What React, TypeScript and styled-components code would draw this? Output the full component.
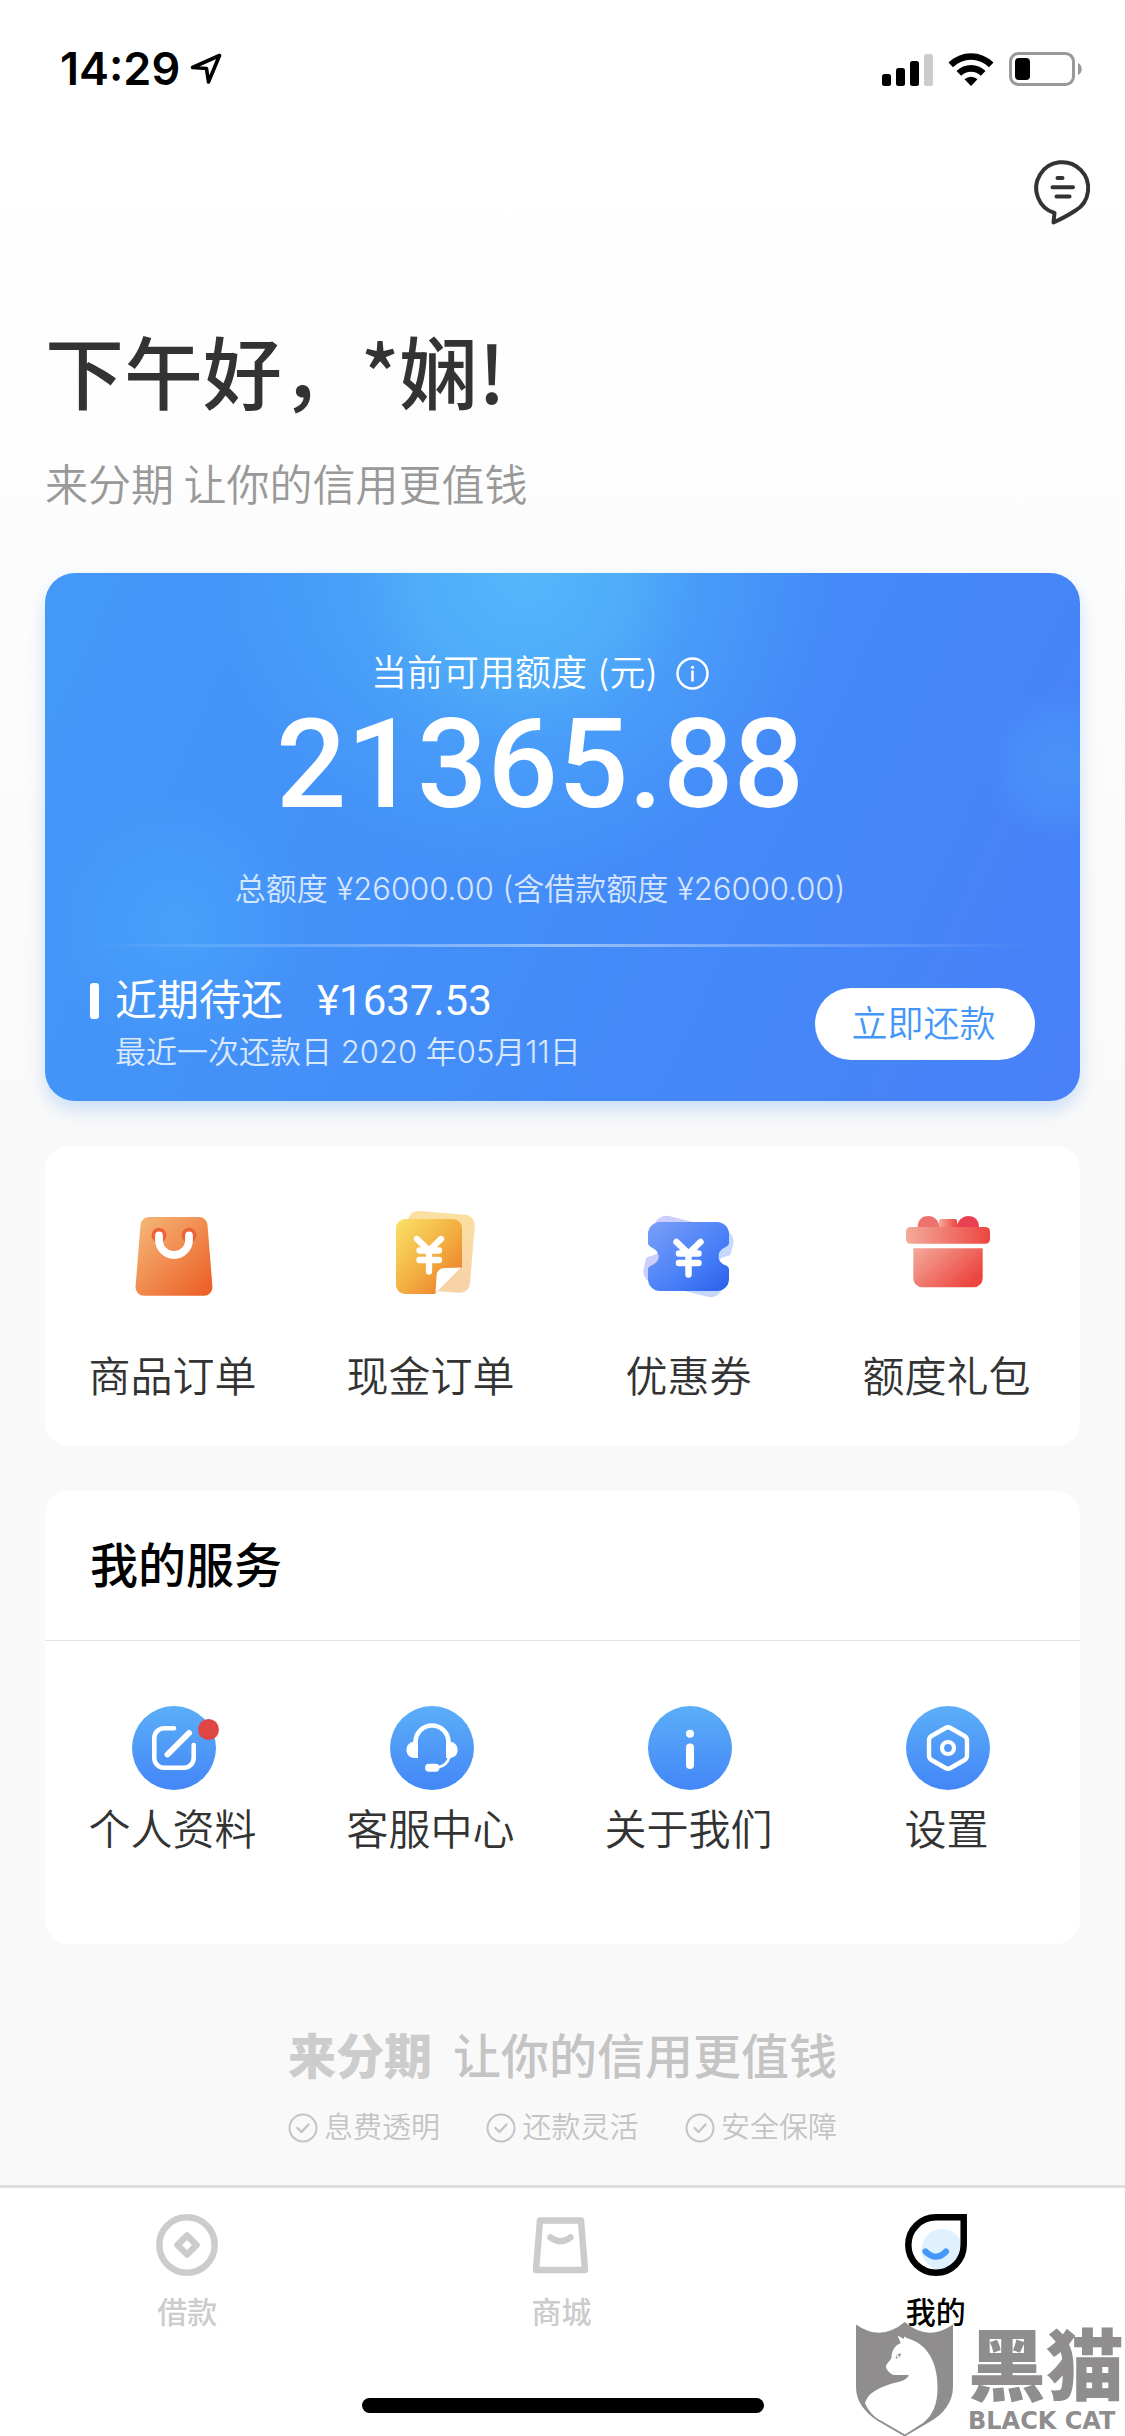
import React from "react";
import styled, { createGlobalStyle } from "styled-components";

const cjk = `"Noto Sans CJK SC", sans-serif`;

const GlobalStyle = createGlobalStyle`
  *, *::before, *::after { box-sizing: border-box; }
  body {
    margin: 0;
    background: #f9f9f9;
    color: #333;
    font-family: Inter, ${cjk};
  }
  h1, h2, p { margin: 0; font-weight: 400; }
  a { color: inherit; text-decoration: none; }
  button { font: inherit; border: 0; padding: 0; background: none; cursor: pointer; }
  svg { display: block; overflow: visible; }
`;

const Page = styled.div`
  position: relative;
  display: flex;
  flex-direction: column;
  min-height: 100vh;
  background: linear-gradient(#fff 0, #fff 160px, #f9f9f9 1150px);
`;

const StatusBar = styled.header`
  display: flex;
  align-items: center;
  justify-content: space-between;
  height: 138px;
  padding: 0 42px 0 60px;
`;

const StatusGroup = styled.div<{ $gap: number }>`
  display: flex;
  align-items: center;
  gap: ${(p) => p.$gap}px;
`;

const Clock = styled.time`
  font-size: 45px;
  font-weight: 600;
  line-height: 54px;
  color: #000;
`;

const Toolbar = styled.div`
  display: flex;
  justify-content: flex-end;
  padding: 22px 36px 0;
`;

const Main = styled.main`
  flex: 1;
  display: flex;
  flex-direction: column;
  padding: 97px 45px 0;
`;

const Greeting = styled.h1`
  font-family: ${cjk};
  font-size: 79px;
  font-weight: 500;
  line-height: 96px;
`;

const Tagline = styled.p`
  margin-top: 34px;
  font-family: ${cjk};
  font-size: 43px;
  font-weight: 350;
  line-height: 60px;
  color: #999;
`;

const CreditCard = styled.section`
  margin-top: 61px;
  padding: 76px 45px 28px;
  border-radius: 30px;
  color: #fff;
  background:
    radial-gradient(circle at 480px 0, rgba(86, 190, 250, 0.85) 0, rgba(86, 190, 250, 0.6) 110px, rgba(86, 190, 250, 0.3) 170px, rgba(86, 190, 250, 0) 310px),
    radial-gradient(circle at 134px 353px, rgba(76, 170, 252, 0.6) 0, rgba(76, 170, 252, 0.3) 60px, rgba(76, 170, 252, 0) 130px),
    radial-gradient(circle at calc(100% - 18px) 193px, rgba(76, 160, 248, 0.5) 0, rgba(76, 160, 248, 0.3) 45px, rgba(76, 160, 248, 0) 75px),
    linear-gradient(115deg, #4499f8 0%, #438cf8 55%, #4880f8 100%);
  box-shadow: 0 9px 18px rgba(68, 145, 240, 0.26);
`;

const Summary = styled.div`
  display: flex;
  flex-direction: column;
  align-items: center;
  padding-right: 45px;
`;

const LimitLabel = styled.div`
  display: flex;
  align-items: center;
  gap: 18px;
  font-size: 36px;
  font-weight: 350;
  line-height: 48px;
`;

const Amount = styled.strong`
  margin-top: 14px;
  font-family: Roboto, sans-serif;
  font-size: 124px;
  font-weight: 500;
  line-height: 108px;
`;

const Total = styled.p`
  margin-top: 49px;
  font-size: 31px;
  font-weight: 350;
  line-height: 42px;
  opacity: 0.78;
`;

const Rule = styled.div`
  height: 3px;
  margin-top: 34px;
  background: linear-gradient(90deg, rgba(255, 255, 255, 0), rgba(255, 255, 255, 0.45) 50%, rgba(255, 255, 255, 0));
`;

const DueRow = styled.div`
  display: flex;
  align-items: center;
  justify-content: space-between;
  margin-top: 27px;
`;

const DueTitle = styled.h2`
  display: flex;
  align-items: center;
  gap: 16px;
  font-family: Roboto, ${cjk};
  font-size: 42px;
  font-weight: 400;
  line-height: 54px;

  &::before {
    content: "";
    width: 9px;
    height: 36px;
    border-radius: 3px;
    background: #fff;
  }
`;

const DueAmount = styled.span`
  margin-left: 18px;
`;

const DueDate = styled.p`
  margin-top: 3px;
  padding-left: 25px;
  font-size: 31px;
  font-weight: 350;
  line-height: 42px;
  opacity: 0.8;
`;

const PayButton = styled.button`
  width: 220px;
  height: 72px;
  padding: 0 3px 6px 0;
  border-radius: 36px;
  background: #fff;
  color: #4497f8;
  font-family: ${cjk};
  font-size: 36px;
  font-weight: 350;
`;

const Panel = styled.section<{ $gap: number }>`
  margin-top: ${(p) => p.$gap}px;
  border-radius: 24px;
  background: #fff;
`;

const PanelTitle = styled.h2`
  padding: 39px 45px 38px;
  border-bottom: 1px solid #e4e4e4;
  color: #000;
  font-size: 48px;
  font-weight: 500;
  line-height: 72px;
`;

const Menu = styled.nav<{ $top: number; $bottom: number }>`
  display: grid;
  grid-template-columns: repeat(4, 1fr);
  padding: ${(p) => p.$top}px 3px ${(p) => p.$bottom}px 0;
`;

const MenuItem = styled.a<{ $gap: number }>`
  display: flex;
  flex-direction: column;
  align-items: center;
  gap: ${(p) => p.$gap}px;
  font-family: ${cjk};
  font-size: 42px;
  font-weight: 350;
  line-height: 60px;
`;

const MenuLabel = styled.span`
  padding-right: 3px;
`;

const Disc = styled.span`
  position: relative;
  width: 84px;
  height: 84px;
  border-radius: 50%;
  background: linear-gradient(#5caef8, #4386f8);
`;

const Dot = styled.span`
  position: absolute;
  top: 13px;
  right: -3px;
  width: 21px;
  height: 21px;
  border-radius: 50%;
  background: #e04545;
`;

const Promise = styled.footer`
  display: flex;
  flex-direction: column;
  align-self: center;
  width: 549px;
  margin: 77px 0 36px;
  color: #c4c4c4;
`;

const PromiseRow = styled.div`
  display: flex;
  align-items: center;
  justify-content: space-between;
`;

const Brand = styled.strong`
  font-size: 48px;
  font-weight: 900;
  line-height: 72px;
  color: #ccc;
`;

const Slogan = styled.span`
  font-size: 48px;
  font-weight: 500;
  line-height: 72px;
`;

const PromiseList = styled.ul`
  display: flex;
  justify-content: space-between;
  margin: 14px 0 0;
  padding: 0;
  list-style: none;
`;

const PromiseItem = styled.li`
  display: flex;
  align-items: center;
  gap: 6px;
  font-size: 29px;
  font-weight: 350;
  line-height: 42px;
`;

const TabBar = styled.nav`
  display: grid;
  grid-template-columns: repeat(3, 1fr);
  padding: 26px 2px 0 0;
  border-top: 3px solid #dfdfdf;
  background: #fff;
`;

const Tab = styled.a<{ $active?: boolean }>`
  display: flex;
  flex-direction: column;
  align-items: center;
  gap: 15px;
  color: ${(p) => (p.$active ? "#000" : "#ccc")};
  font-size: 30px;
  font-weight: 500;
  line-height: 42px;
`;

const HomeArea = styled.div`
  display: flex;
  justify-content: center;
  padding: 65px 0 24px;
  background: #fff;
`;

const HomeIndicator = styled.div`
  width: 402px;
  height: 15px;
  border-radius: 8px;
  background: #000;
`;

const Watermark = styled.div`
  position: absolute;
  right: 1px;
  bottom: 0;
  display: flex;
  align-items: flex-end;
  gap: 15px;
  color: #8f8d8e;
`;

const WatermarkText = styled.div`
  display: flex;
  flex-direction: column;
  font-family: ${cjk};
  font-size: 78px;
  font-weight: 900;
  line-height: 78px;
`;

const WatermarkLatin = styled.span`
  margin-top: 5px;
  font-family: "DejaVu Sans", sans-serif;
  font-size: 24px;
  font-weight: 700;
  line-height: 32px;
`;

const yen = "M30 28 42 39.500 54 28M42 39.500V60.500M32.500 39.500h19.500M32.500 49h19.500";

const ticket =
  "M15 11H72a12 12 0 0 1 12 12v9c0 5-10.300 4-10.300 13.500S84 53 84 58v10a12 12 0 0 1-12 12H15a12 12 0 0 1-12-12V58c0-4 10.700-4 10.700-12.500S3 37 3 32v-9a12 12 0 0 1 12-12Z";

const SignalIcon = () => (
  <svg width="51" height="33" viewBox="0 0 51 33" aria-hidden="true">
    <rect x="0" y="21" width="9" height="12" rx="2.500" />
    <rect x="14" y="15" width="9" height="18" rx="2.500" />
    <rect x="28" y="8" width="9" height="25" rx="2.500" />
    <rect x="42" y="1" width="9" height="32" rx="2.500" fill="#ccc" />
  </svg>
);

const WifiIcon = () => (
  <svg width="46" height="33" viewBox="0 0 46 33" aria-hidden="true">
    <path d="M.5 9.500a32 32 0 0 1 45 0l-4.500 4.800a25.500 25.500 0 0 0-36 0Z" />
    <path d="M8.500 18a20.500 20.500 0 0 1 29 0l-4.700 4.700a14 14 0 0 0-19.600 0Z" />
    <path d="M16.500 26.300a9.300 9.300 0 0 1 13 0L23 33Z" />
  </svg>
);

const BatteryIcon = () => (
  <svg width="74" height="34" viewBox="0 0 74 34" aria-hidden="true">
    <rect x="1.500" y="1.500" width="63" height="31" rx="8" fill="none" stroke="#999" strokeWidth="3" />
    <rect x="6" y="6" width="15" height="22" rx="4" />
    <path d="M69 11c5 2 5 10 0 12Z" fill="#999" />
  </svg>
);

const LocationIcon = () => (
  <svg width="32" height="32" viewBox="0 0 32 32" aria-hidden="true">
    <path d="M29.500 2.500 2.500 14.500 16.500 15.500 18.500 29Z" fill="none" stroke="#000" strokeWidth="3.600" strokeLinejoin="round" />
  </svg>
);

const ChatIcon = () => (
  <svg width="57" height="65" viewBox="0 0 57 65" fill="none" stroke="#333" strokeWidth="4" strokeLinecap="round" strokeLinejoin="round" aria-hidden="true">
    <path d="M22.500 53A26 26 0 1 1 43.500 50.500C36 55.500 29 59 21.500 62.500Z" />
    <path d="M25.500 18h5M20.500 27.300h20.500M24.500 36.500h13" />
  </svg>
);

const HintIcon = () => (
  <svg width="33" height="33" viewBox="0 0 33 33" fill="none" stroke="#fff" aria-hidden="true">
    <circle cx="16.500" cy="16.500" r="15" strokeWidth="2.500" />
    <path d="M16.500 14.500v9" strokeWidth="2.600" strokeLinecap="round" />
    <circle cx="16.500" cy="10.300" r="1.600" fill="#fff" stroke="none" />
  </svg>
);

const BagIcon = () => (
  <svg width="90" height="90" viewBox="0 0 90 90" aria-hidden="true">
    <defs>
      <linearGradient id="bag" x1="0" y1="0" x2="1" y2="1">
        <stop offset="0" stopColor="#f5ba7b" />
        <stop offset="1" stopColor="#ec5b22" />
      </linearGradient>
    </defs>
    <path d="M20 6H70a8.500 8.500 0 0 1 8.500 8L83.500 76a8.500 8.500 0 0 1-8.500 8.700H15A8.500 8.500 0 0 1 6.500 76L11.500 14A8.500 8.500 0 0 1 20 6Z" fill="url(#bag)" />
    <circle cx="30" cy="24.300" r="7.500" fill="#ee6238" />
    <circle cx="60" cy="24.300" r="7.500" fill="#ee6238" />
    <path d="M30 24.500V29a15 15 0 0 0 30 0V24.500" fill="none" stroke="#fff" strokeWidth="7.800" strokeLinecap="round" />
  </svg>
);

const CashIcon = () => (
  <svg width="90" height="90" viewBox="0 0 90 90" aria-hidden="true">
    <defs>
      <linearGradient id="cash" x1="0" y1="0" x2="1" y2="1">
        <stop offset="0" stopColor="#fae268" />
        <stop offset=".55" stopColor="#f2ab3e" />
        <stop offset="1" stopColor="#ec6f26" />
      </linearGradient>
      <linearGradient id="cashBack" x1="0" y1="0" x2="0" y2="1">
        <stop offset="0" stopColor="#fae0a0" />
        <stop offset="1" stopColor="#f7d2a8" />
      </linearGradient>
    </defs>
    <path d="M32 0 78 3.800A10.500 10.500 0 0 1 87.800 15L83 72a10 10 0 0 1-11 9.700L48 80 21 8A11 11 0 0 1 32 0Z" fill="url(#cashBack)" />
    <path d="M18 8H66a9 9 0 0 1 9 9V56.500L48 83H18a9 9 0 0 1-9-9V17a9 9 0 0 1 9-9Z" fill="url(#cash)" />
    <path d="M48.500 82.500 49.500 66q0-9 9-9L74.500 56.500Z" fill="#fff" />
    <path d={yen} fill="none" stroke="#fff" strokeWidth="6.300" strokeLinecap="round" />
  </svg>
);

const CouponIcon = () => (
  <svg width="90" height="90" viewBox="0 0 90 90" aria-hidden="true">
    <defs>
      <linearGradient id="coupon" x1="0" y1="0" x2="1" y2="1">
        <stop offset="0" stopColor="#7a9ff8" />
        <stop offset=".6" stopColor="#487ff8" />
        <stop offset="1" stopColor="#2a60ea" />
      </linearGradient>
      <linearGradient id="couponBack" x1="0" y1="0" x2="1" y2="0">
        <stop offset="0" stopColor="#cccefb" />
        <stop offset="1" stopColor="#c6dafd" />
      </linearGradient>
    </defs>
    <g transform="rotate(14 43.500 45)">
      <path d={ticket} fill="url(#couponBack)" />
    </g>
    <path d={ticket} fill="url(#coupon)" />
    <g transform="translate(1.500 3)">
      <path d={yen} fill="none" stroke="#fff" strokeWidth="6.500" strokeLinecap="round" />
    </g>
  </svg>
);

const GiftIcon = () => (
  <svg width="90" height="90" viewBox="0 0 90 90" aria-hidden="true">
    <defs>
      <linearGradient id="gift" x1="0" y1="0" x2="1" y2=".6">
        <stop offset="0" stopColor="#f4aa9b" />
        <stop offset="1" stopColor="#ec4640" />
      </linearGradient>
      <linearGradient id="giftLid" x1="0" y1="0" x2="1" y2="0">
        <stop offset="0" stopColor="#f4aa9b" />
        <stop offset="1" stopColor="#ec4640" />
      </linearGradient>
    </defs>
    <path d="M14.700 16C14.700 8 20 5 25.500 5 32 5 36.300 10.500 36.300 16Z" fill="#ed726d" />
    <path d="M76 16C76 8 70.500 5 65 5 59.500 5 54 10 53.700 16Z" fill="#ea4152" />
    <rect x="36" y="8" width="18" height="11" rx="2" fill="url(#giftLid)" />
    <rect x="3" y="16" width="84" height="16.700" rx="4.500" fill="url(#giftLid)" />
    <path d="M10.300 37.300H79.700V67a9 9 0 0 1-9 9.300H19.300a9 9 0 0 1-9-9.300Z" fill="url(#gift)" />
  </svg>
);

const DiscDrawing = ({ children }: { children: React.ReactNode }) => (
  <svg width="84" height="84" viewBox="0 0 84 84" fill="none" stroke="#fff" strokeLinecap="round" strokeLinejoin="round" aria-hidden="true">
    {children}
  </svg>
);

const EditIcon = () => (
  <DiscDrawing>
    <path d="M42 22.300H32A9.700 9.700 0 0 0 22.300 32V52a9.700 9.700 0 0 0 9.700 9.700H52A9.700 9.700 0 0 0 61.700 52V39" strokeWidth="4.600" />
    <path d="M57 27 35.500 48.500" strokeWidth="6" />
  </DiscDrawing>
);

const HeadsetIcon = () => (
  <DiscDrawing>
    <path d="M25.500 37V36a16.500 16.500 0 0 1 33 0v1" strokeWidth="4.600" />
    <path d="M28 39v13h-3c-5 0-8.500-3-8.500-8s3.500-8.500 8.500-8.500c2 0 3 1 3 3.500ZM56 39v13h3c5 0 8.700-3 8.700-8s-3.700-8.500-8.700-8.500c-2 0-3 1-3 3.500Z" fill="#fff" stroke="none" />
    <path d="M59.500 51C57.500 57 54 60 49 61" strokeWidth="2.600" />
    <rect x="35" y="57.700" width="14.500" height="8" rx="4" fill="#fff" stroke="none" />
  </DiscDrawing>
);

const AboutIcon = () => (
  <DiscDrawing>
    <circle cx="42" cy="27.700" r="4" fill="#fff" stroke="none" />
    <path d="M42 41.500V59" strokeWidth="8" />
  </DiscDrawing>
);

const SettingsIcon = () => (
  <DiscDrawing>
    <path d="M39.500 22q2.500-1.500 5 0L58.500 30q2.500 1.500 2.500 4.500V49.500q0 3-2.500 4.500L44.500 62q-2.500 1.500-5 0L25.500 54Q23 52.500 23 49.500V34.500Q23 31.500 25.500 30Z" strokeWidth="4.400" />
    <circle cx="42" cy="42" r="6" strokeWidth="4.200" />
  </DiscDrawing>
);

const CheckIcon = () => (
  <svg width="30" height="30" viewBox="0 0 30 30" fill="none" stroke="#c4c4c4" strokeWidth="2" strokeLinecap="round" strokeLinejoin="round" aria-hidden="true">
    <circle cx="15" cy="15" r="13.500" />
    <path d="M9.500 15 13.500 19 20.500 11.500" strokeWidth="2.400" />
  </svg>
);

const LoanIcon = () => (
  <svg width="62" height="62" viewBox="0 0 62 62" fill="none" stroke="#ccc" strokeWidth="6.500" strokeLinejoin="round" aria-hidden="true">
    <circle cx="31" cy="31" r="27.700" />
    <path d="M31 21.500 40.500 31 31 40.500 21.500 31Z" />
  </svg>
);

const MallIcon = () => (
  <svg width="62" height="62" viewBox="0 0 62 62" fill="none" stroke="#ccc" strokeWidth="6.500" strokeLinejoin="round" aria-hidden="true">
    <path d="M10 6.500H51L55 56H6Z" />
    <path d="M20.500 23.500q10 7.500 20 0" strokeLinecap="round" />
  </svg>
);

const MineIcon = () => (
  <svg width="62" height="62" viewBox="0 0 62 62" fill="none" aria-hidden="true">
    <circle cx="37" cy="35.500" r="20.500" fill="#dff0ff" />
    <path d="M31 3.300H58.700V31A27.700 27.700 0 1 1 31 3.300Z" stroke="#000" strokeWidth="6.500" />
    <path d="M20.500 37.500q10.500 10.500 20.500 0" stroke="#4499f8" strokeWidth="6.200" strokeLinecap="round" />
  </svg>
);

const ShieldCat = () => (
  <svg width="97" height="115" viewBox="0 0 97 115" aria-hidden="true">
    <path d="M0 2.500Q25 20 48.700 0 72 20 97 2.500V65C97 80 87 92 76 98.500L48.700 114.500 21 98.500C9 90 0 80 0 65Z" fill="#8f8d8e" />
    <path d="M41.500 13.500 44.700 21C38 24 36 29 35.500 35 35 39 30 41 30 45 31 49 35 52.500 38 53H53C50 59 44 59.500 36 61.500 22 66 12 71 9 81 12 88 16 93 22 97L49 112.500 67 101C77 93 81.500 82 81.500 66 82 42 72 22 52 16.500L48 14.500V17Z" fill="#fff" />
    <path d="M39.500 36.500q1-5 5.500-5-.5 5-5.500 5Z" fill="#8f8d8e" />
    <circle cx="42" cy="34.500" r="1.200" fill="#fff" />
  </svg>
);

const orders = [
  { label: "商品订单", Icon: BagIcon },
  { label: "现金订单", Icon: CashIcon },
  { label: "优惠券", Icon: CouponIcon },
  { label: "额度礼包", Icon: GiftIcon },
];

const services = [
  { label: "个人资料", Icon: EditIcon, unread: true },
  { label: "客服中心", Icon: HeadsetIcon },
  { label: "关于我们", Icon: AboutIcon },
  { label: "设置", Icon: SettingsIcon },
];

const promises = ["息费透明", "还款灵活", "安全保障"];

export default function App() {
  return (
    <Page lang="zh-CN">
      <GlobalStyle />
      <StatusBar>
        <StatusGroup $gap={10}>
          <Clock>14:29</Clock>
          <LocationIcon />
        </StatusGroup>
        <StatusGroup $gap={15}>
          <SignalIcon />
          <WifiIcon />
          <BatteryIcon />
        </StatusGroup>
      </StatusBar>
      <Toolbar>
        <button type="button" aria-label="消息">
          <ChatIcon />
        </button>
      </Toolbar>

      <Main>
        <Greeting>下午好，*娴!</Greeting>
        <Tagline>来分期 让你的信用更值钱</Tagline>

        <CreditCard>
          <Summary>
            <LimitLabel>
              当前可用额度 (元)
              <button type="button" aria-label="额度说明">
                <HintIcon />
              </button>
            </LimitLabel>
            <Amount>21365.88</Amount>
            <Total>总额度 ¥26000.00 (含借款额度 ¥26000.00)</Total>
          </Summary>
          <Rule />
          <DueRow>
            <div>
              <DueTitle>
                近期待还
                <DueAmount>¥1637.53</DueAmount>
              </DueTitle>
              <DueDate>最近一次还款日 2020 年05月11日</DueDate>
            </div>
            <PayButton type="button">立即还款</PayButton>
          </DueRow>
        </CreditCard>

        <Panel $gap={45}>
          <Menu $top={65} $bottom={42}>
            {orders.map(({ label, Icon }) => (
              <MenuItem key={label} href="#" $gap={43}>
                <Icon />
                <MenuLabel>{label}</MenuLabel>
              </MenuItem>
            ))}
          </Menu>
        </Panel>

        <Panel $gap={45}>
          <PanelTitle>我的服务</PanelTitle>
          <Menu $top={65} $bottom={87}>
            {services.map(({ label, Icon, unread }) => (
              <MenuItem key={label} href="#" $gap={7}>
                <Disc>
                  <Icon />
                  {unread && <Dot />}
                </Disc>
                <MenuLabel>{label}</MenuLabel>
              </MenuItem>
            ))}
          </Menu>
        </Panel>

        <Promise>
          <PromiseRow>
            <Brand>来分期</Brand>
            <Slogan>让你的信用更值钱</Slogan>
          </PromiseRow>
          <PromiseList>
            {promises.map((text) => (
              <PromiseItem key={text}>
                <CheckIcon />
                {text}
              </PromiseItem>
            ))}
          </PromiseList>
        </Promise>
      </Main>

      <TabBar>
        <Tab href="#">
          <LoanIcon />
          借款
        </Tab>
        <Tab href="#">
          <MallIcon />
          商城
        </Tab>
        <Tab href="#" $active aria-current="page">
          <MineIcon />
          我的
        </Tab>
      </TabBar>
      <HomeArea>
        <HomeIndicator />
      </HomeArea>

      <Watermark>
        <ShieldCat />
        <WatermarkText>
          黑猫
          <WatermarkLatin>BLACK CAT</WatermarkLatin>
        </WatermarkText>
      </Watermark>
    </Page>
  );
}
